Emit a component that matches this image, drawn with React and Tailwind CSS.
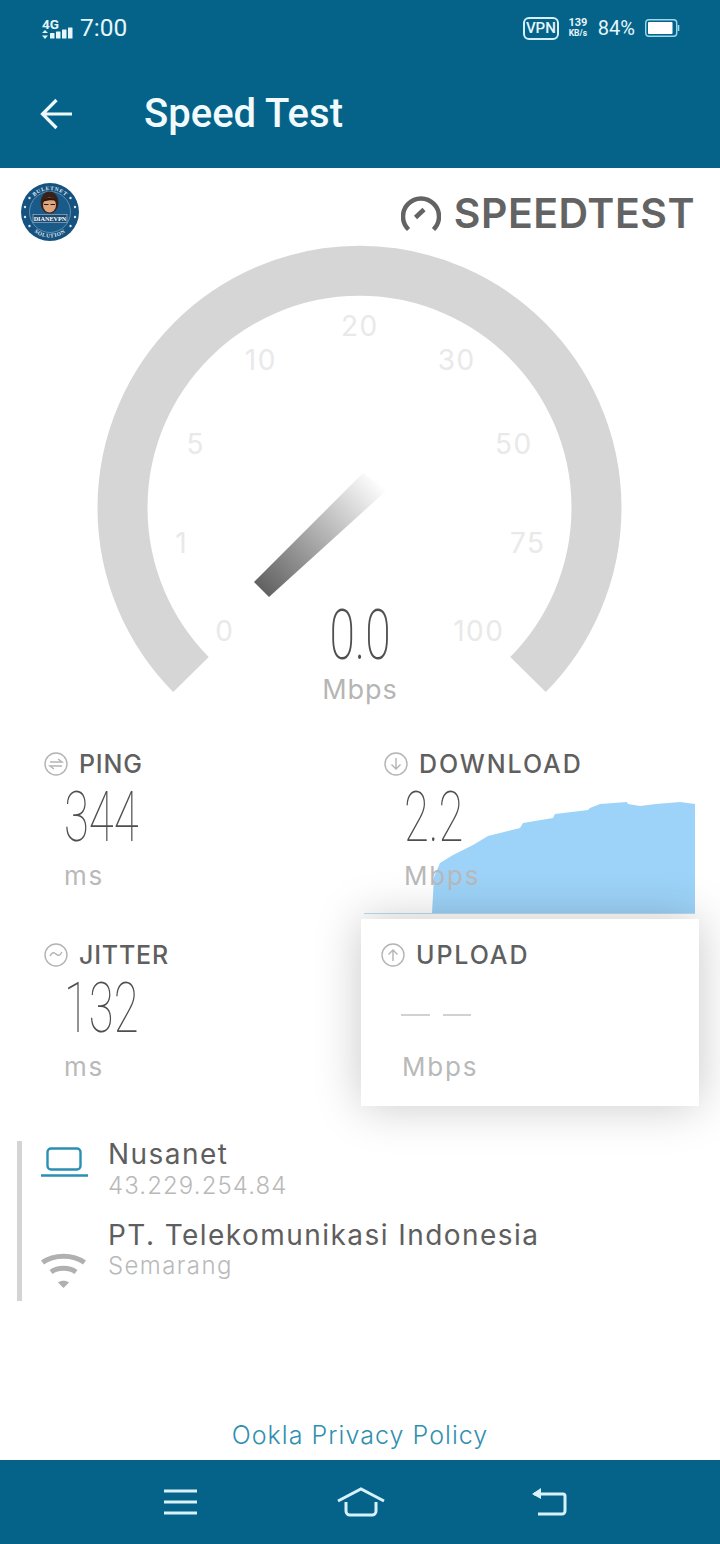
import React from 'react';

const ticks = [
  ['0', 224, 631], ['1', 181, 543], ['5', 195, 444], ['10', 260, 360], ['20', 359, 326],
  ['30', 456, 360], ['50', 513, 444], ['75', 527, 543], ['100', 478, 631],
];

function RoundIcon({ children }) {
  return (
    <svg viewBox="0 0 24 24" fill="none" stroke="#b4b4b4" strokeWidth="1.4" className="w-6 h-6 shrink-0">
      <circle cx="12" cy="12" r="11" />
      {children}
    </svg>
  );
}

function Thin({ children }) {
  return (
    <div className="h-[76px] pt-[2px] leading-[78px] text-[71px] text-[#4f4f4f] font-thin whitespace-nowrap origin-left scale-x-[0.64] ml-[-1px] [font-family:Roboto,sans-serif]">
      {children}
    </div>
  );
}

function Label({ icon, wide, children }) {
  return (
    <div className="flex items-center gap-[11px] h-6">
      {icon}
      <span className={`text-[25px] leading-6 font-medium text-[#5f5f5f] ${wide ? 'tracking-[1.9px]' : 'tracking-[0.8px]'}`}>{children}</span>
    </div>
  );
}

function Stat({ icon, label, value, unit, wide, className = '' }) {
  return (
    <div className={className}>
      <Label icon={icon} wide={wide}>{label}</Label>
      <div className="pl-[21px]">
        <Thin>{value}</Thin>
        <div className="mt-1.5 h-9 leading-9 text-[26px] tracking-[1.8px] text-[#b9b9b9] ml-[-1px]">{unit}</div>
      </div>
    </div>
  );
}

function StatusBar() {
  return (
    <div className="flex items-center h-14 pl-[42px] pr-[40px] text-[#e6f6fb] [font-family:Roboto,sans-serif]">
      <svg viewBox="0 -4 32 25" className="w-8 h-[25px] mt-[-4px]" fill="currentColor">
        <text x="0" y="11" fontSize="13.500" fontWeight="700" fontFamily="Roboto, sans-serif">4G</text>
        <path d="M3 12 6 15H0zM3 21 0 17.500h6z" />
        <rect x="8" y="15" width="4.500" height="5.500" rx="0.500" />
        <rect x="14" y="13.500" width="4.500" height="7" rx="0.500" />
        <rect x="20" y="11.500" width="4.500" height="9" rx="0.500" />
        <rect x="26" y="9.500" width="4.500" height="11" rx="0.500" />
      </svg>
      <span className="ml-[6px] text-[24.500px] leading-none">7:00</span>
      <div className="ml-auto flex items-center">
        <span className="w-9 h-[23px] flex items-center justify-center rounded-[6px] border-2 border-[#d5f0f8] text-[15px] font-medium leading-none">VPN</span>
        <div className="ml-2 w-[22px] flex flex-col items-center text-[10px] font-bold leading-[10px]">
          <span className="text-[11px]">139</span>
          <span className="text-[8.5px]">KB/s</span>
        </div>
        <span className="ml-[9px] text-[20px] leading-none">84%</span>
        <svg viewBox="0 0 35 18" className="ml-[10px] w-[35px] h-[18px]" fill="none">
          <rect x="0.7" y="0.7" width="31" height="16.6" rx="3" stroke="#9bd8ea" strokeWidth="1.4" />
          <rect x="3" y="3" width="24.5" height="12" rx="1" fill="#ffffff" />
          <path d="M33.5 6v6" stroke="#9bd8ea" strokeWidth="1.6" />
        </svg>
      </div>
    </div>
  );
}

function Logo() {
  return (
    <svg viewBox="0 0 58 58" className="w-[58px] h-[58px]">
      <defs>
        <path id="logoTop" d="M7 29a22 22 0 0 1 44 0" />
        <path id="logoBottom" d="M3.500 29a25.500 25.500 0 0 0 51 0" />
      </defs>
      <circle cx="29" cy="29" r="29" fill="#15527f" />
      <circle cx="29" cy="29" r="20.500" fill="#1a5a88" stroke="#8fb4cd" strokeWidth="0.6" />
      {[[4, 24], [4, 34], [54, 24], [54, 34], [8.500, 15], [49.500, 15], [8.500, 43], [49.500, 43]].map(([x, y]) => (
        <circle key={`${x}-${y}`} cx={x} cy={y} r="1.200" fill="#dbe9f2" />
      ))}
      <text fontSize="5.500" fontWeight="700" fill="#e5eef4" fontFamily="'Liberation Serif', serif" letterSpacing="0.6">
        <textPath href="#logoTop" startOffset="50%" textAnchor="middle">BULETNET</textPath>
      </text>
      <text fontSize="5.500" fontWeight="700" fill="#e5eef4" fontFamily="'Liberation Serif', serif" letterSpacing="0.6">
        <textPath href="#logoBottom" startOffset="50%" textAnchor="middle">SOLUTION</textPath>
      </text>
      <ellipse cx="28.500" cy="19.500" rx="9" ry="11" fill="#3a2118" />
      <ellipse cx="28.500" cy="22" rx="6.500" ry="7.500" fill="#e0a57d" />
      <path d="M21 19c3-5 10-6 15-1-4-1-9-1-15 1Z" fill="#2b160f" />
      <path d="M23 21.500h4.500M29.500 21.500H34" stroke="#1d1d1d" strokeWidth="1.100" />
      <rect x="12" y="31.500" width="34" height="8" fill="#1b4a70" stroke="#c8d8e4" strokeWidth="0.5" />
      <text x="29" y="37.800" textAnchor="middle" fontSize="6.200" fontWeight="700" fill="#ffffff" fontFamily="'Liberation Serif', serif">DIANEVPN</text>
    </svg>
  );
}

function Brand() {
  return (
    <div className="flex items-center pr-[25px]">
      <svg viewBox="0 0 40 36" fill="none" stroke="#636363" strokeWidth="4.500" className="w-10 h-9">
        <path d="M7.500 33.500A18 18 0 1 1 32.500 33.500" />
        <path d="M14.500 21.500 23 13.500" />
      </svg>
      <span className="ml-[13px] text-[41px] leading-none font-[560] tracking-[0.5px] text-[#636363]">SPEEDTEST</span>
    </div>
  );
}

function Gauge() {
  return (
    <div className="relative h-[512px]">
      <svg viewBox="0 240 720 512" className="w-[720px] h-[512px]" fill="none">
        <defs>
          <linearGradient id="needle" gradientUnits="userSpaceOnUse" x1="262" y1="589" x2="378" y2="480">
            <stop offset="0" stopColor="#626262" />
            <stop offset="1" stopColor="#ffffff" />
          </linearGradient>
        </defs>
        <path d="M191 674.500A237 237 0 1 1 528 674.500" stroke="#d6d6d6" strokeWidth="50" />
        <path d="M254 582 363 473 387 490 269 597Z" fill="url(#needle)" />
        {ticks.map(([t, x, y]) => (
          <text key={t} x={x + 0.8} y={y + 10} textAnchor="middle" fontSize="28" letterSpacing="1.500" fill="#e9e9e9" fontFamily="Inter, sans-serif">{t}</text>
        ))}
      </svg>
      <div className="absolute inset-x-0 top-[356px] flex flex-col items-center">
        <div className="h-[76px] leading-[78px] text-[71px] font-extralight text-[#505050] scale-x-[0.65] [font-family:Roboto,sans-serif]">0.0</div>
        <div className="h-9 leading-9 text-[27px] tracking-[1px] text-[#b5b5b5]">Mbps</div>
      </div>
    </div>
  );
}

function DownloadChart() {
  return (
    <svg viewBox="0 0 332 112" className="absolute left-[-20px] top-[50px] w-[332px] h-[112px]" preserveAspectRatio="none">
      <path d="M68 111 70 75 76 61 89 53 109 43 124 34 156 26 159 21 189 16 191 12 224 8 226 6 236 2 263 0 264 2 276 4 292 2 316 0 331 2V111Z" fill="#9dd3f8" />
      <path d="M0 111.500H331" stroke="#bcdcf0" strokeWidth="1" />
    </svg>
  );
}

export default function App() {
  return (
    <div className="w-[720px] h-[1544px] flex flex-col bg-white overflow-hidden [font-family:Inter,sans-serif]">
      <header className="h-[168px] shrink-0 bg-[#05638a]">
        <StatusBar />
        <div className="flex items-center h-[116px] pl-10">
          <svg viewBox="0 0 33 32" fill="none" stroke="#eef9fc" strokeWidth="3.200" className="w-[33px] h-8">
            <path d="M32 16H3M16.500 2 2.500 16l14 14" />
          </svg>
          <h1 className="ml-[71px] text-[40px] leading-none font-medium text-[#f1fbfd] [font-family:Roboto,sans-serif]">Speed Test</h1>
        </div>
      </header>

      <div className="flex justify-between items-start h-[72px] pl-[21px] pt-[15px]">
        <Logo />
        <div className="pt-[10px]"><Brand /></div>
      </div>

      <Gauge />

      <section className="grid grid-cols-2 h-[382px]">
        <div className="pl-[44px]">
          <Stat
            className="h-[191px]"
            label="PING"
            value="344"
            unit="ms"
            icon={<RoundIcon><path d="M6 10h12l-4-3M18 14H6l4 3" /></RoundIcon>}
          />
          <Stat
            label="JITTER"
            value="132"
            unit="ms"
            icon={<RoundIcon><path d="M6 13c2-4 4-4 6-2s4 2 6-2" /></RoundIcon>}
          />
        </div>
        <div className="relative pl-[24px]">
          <div className="relative h-[167px]">
            <DownloadChart />
            <div className="relative">
              <Stat
                wide
                label="DOWNLOAD"
                value="2.2"
                unit="Mbps"
                icon={<RoundIcon><path d="M12 6v11M7.500 12.500 12 17l4.500-4.500" /></RoundIcon>}
              />
            </div>
          </div>
          <div className="relative ml-[-23px] w-[338px] h-[187px] pl-5 pt-6 bg-white shadow-[0_0_44px_rgba(0,0,0,0.22)]">
            <Label wide icon={<RoundIcon><path d="M12 18V7M7.500 11.500 12 7l4.500 4.500" /></RoundIcon>}>UPLOAD</Label>
            <div className="pl-[20px] flex gap-[13px] mt-[47px]">
              <div className="w-[29px] h-[2px] bg-[#d2d2d2]" />
              <div className="w-[28px] h-[2px] bg-[#d2d2d2]" />
            </div>
            <div className="pl-[21px] mt-[33px] h-9 leading-9 text-[26px] tracking-[1.8px] text-[#b9b9b9]">Mbps</div>
          </div>
        </div>
      </section>

      <section className="ml-[17px] mt-[7px] h-[160px] border-l-[5px] border-[#d4d4d4] pl-[19px]">
        <div className="flex gap-5">
          <svg viewBox="0 0 47 30" fill="none" stroke="#2a8fb5" strokeWidth="2.400" className="w-[47px] h-[30px] mt-[6px] shrink-0">
            <rect x="6.500" y="1.500" width="33" height="21" rx="3.500" />
            <path d="M0 28.500h47" />
          </svg>
          <div>
            <div className="h-7 leading-[26px] text-[28px] tracking-[1.450px] text-[#5e5e5e]">Nusanet</div>
            <div className="h-[34px] leading-[34px] text-[24px] tracking-[1.100px] font-light text-[#b9b9b9]">43.229.254.84</div>
          </div>
        </div>
        <div className="flex gap-5 mt-[18px]">
          <svg viewBox="0 0 47 35" fill="none" stroke="#b0b0b0" strokeWidth="5" className="w-[49px] h-[35px] mt-8 ml-[-2px] shrink-0">
            <path d="M2.500 9.500C14 1 33 1 44.500 9.500" />
            <path d="M11 19c7-5 18-5 25 0" />
            <path d="M18 29.500 23.500 35 29 29.500c-3-2.500-8-2.500-11 0Z" fill="#b0b0b0" stroke="none" />
          </svg>
          <div>
            <div className="h-7 leading-7 text-[28px] tracking-[1.450px] text-[#5e5e5e] whitespace-nowrap">PT. Telekomunikasi Indonesia</div>
            <div className="h-[34px] leading-[34px] text-[24px] tracking-[1.400px] font-light text-[#b9b9b9]">Semarang</div>
          </div>
        </div>
      </section>

      <a className="mt-auto mb-[9px] text-center text-[25px] leading-8 tracking-[1.050px] font-light text-[#2f8fb0]">Ookla Privacy Policy</a>

      <footer className="h-[84px] shrink-0 bg-[#05638a] flex items-center pl-[164px] pb-[1px]">
        <svg viewBox="0 0 33 26" fill="none" stroke="#d7f2fa" strokeWidth="3" className="w-[33px] h-[26px]">
          <path d="M0 2h33M0 13h33M0 24h33" />
        </svg>
        <svg viewBox="0 0 48 30" fill="none" stroke="#d7f2fa" strokeWidth="3" className="ml-[140px] w-12 h-[30px]">
          <path d="M1 14 24 2l23 12" />
          <path d="M9 15v9a4 4 0 0 0 4 4h22a4 4 0 0 0 4-4v-9" />
        </svg>
        <svg viewBox="0 0 35 28" fill="none" stroke="#d7f2fa" strokeWidth="3" className="ml-[147px] w-[35px] h-7">
          <path d="M6 26h24a3 3 0 0 0 3-3V8a2 2 0 0 0-2-2H2" />
          <path d="M9 0v11L0 6z" fill="#d7f2fa" stroke="none" />
        </svg>
      </footer>
    </div>
  );
}
